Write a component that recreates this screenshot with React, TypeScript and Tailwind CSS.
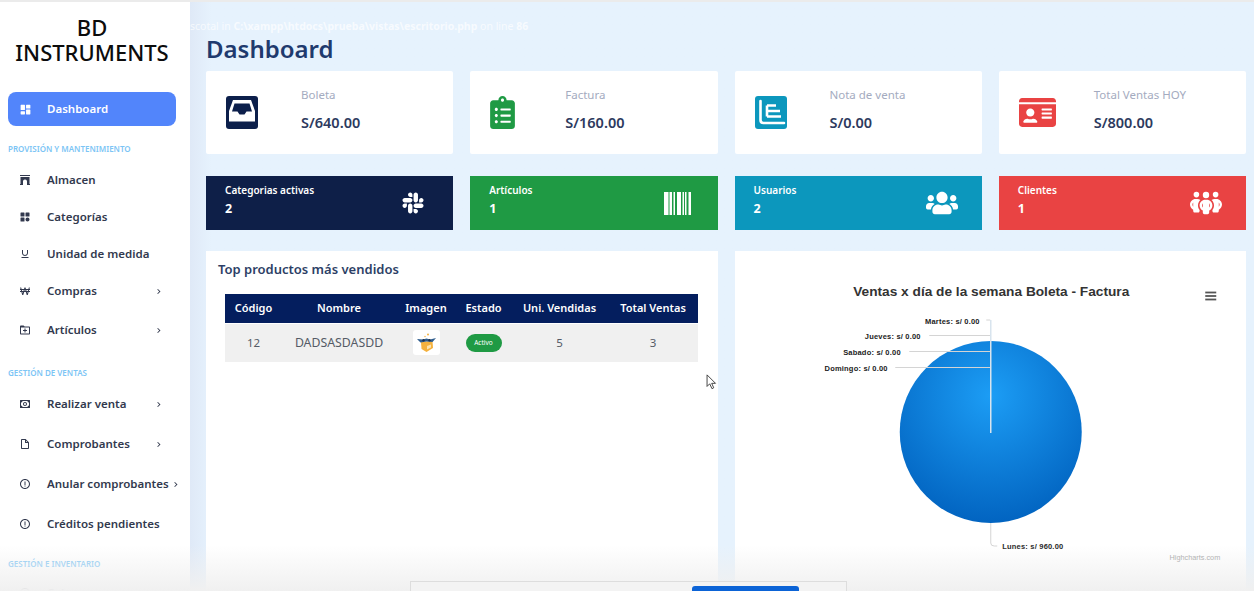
import React from "react";
import {
  BiSolidDashboard, BiSolidArch, BiSolidCategory, BiUnderline, BiWon, BiFolderPlus, BiMoney, BiFileBlank, BiErrorCircle, BiChevronRight,
} from "react-icons/bi";
import { FaClipboardList, FaIdCard, FaSlack, FaUsers } from "react-icons/fa";
import { FaPeopleGroup } from "react-icons/fa6";

function InboxIcon({ className }: { className?: string }) {
  return (
    <svg viewBox="0 0 32 33" className={className}>
      <rect x="0" y="0" width="32" height="33" rx="3" fill="currentColor" />
      <path d="M7 4 H25 L29 15 V25.5 H3 V15 Z" fill="#fff" />
      <path d="M8.5 7.5 H23.5 L26 15.5 H20.5 L18.5 18.5 H13.5 L11.5 15.5 H6 Z" fill="currentColor" />
    </svg>
  );
}

function PollIcon({ className }: { className?: string }) {
  return (
    <svg viewBox="0 0 32 33" className={className}>
      <rect x="0" y="0" width="32" height="33" rx="3" fill="currentColor" />
      <path d="M5.5 5 V24 Q5.5 27 8.5 27 H29" fill="none" stroke="#fff" strokeWidth="2.6" strokeLinecap="round" />
      <path d="M12 9.5 H21 M12 15 H25 M12 20.5 H26 M12 9.5 V20.5" fill="none" stroke="#fff" strokeWidth="2.6" />
    </svg>
  );
}

function BarcodeIcon({ className }: { className?: string }) {
  const bars = [[0, 4.5], [5.5, 2.5], [9.5, 1.5], [13, 4], [18.5, 1.5], [21, 1.5], [24.5, 2.5]];
  return (
    <svg viewBox="0 0 27 23" className={className}>
      {bars.map(([x, w]) => (
        <rect key={x} x={x} y="0" width={w} height="23" fill="#fff" />
      ))}
    </svg>
  );
}

function Item({ icon: Icon, label, h, chev, chevClass }: { icon: any; label: string; h: string; chev?: boolean; chevClass?: string }) {
  return (
    <div className={`flex items-center pl-[19px] shrink-0 ${h} text-[#32394e]`}>
      <Icon className="w-[12px] h-[12px] shrink-0" />
      <span className="ml-[16px] text-[11.5px] font-semibold whitespace-nowrap">{label}</span>
      {chev && <BiChevronRight className={`w-[11px] h-[11px] ${chevClass ?? "ml-auto mr-[26px]"}`} />}
    </div>
  );
}

function Heading({ children, cls }: { children: string; cls: string }) {
  return <div className={`pl-[8px] text-[8px] font-semibold text-[#7cc5f5] uppercase whitespace-nowrap shrink-0 ${cls}`}>{children}</div>;
}

function Stat({ icon: Icon, color, label, value, size, iconW }: { icon: any; color: string; label: string; value: string; size: string; iconW: string }) {
  return (
    <div className="bg-white h-[83px] flex items-center pl-[20px] rounded-[2px]">
      <div className={`${iconW} ${color} flex items-center shrink-0`}>
        <Icon className={size} />
      </div>
      <div className="-mt-[7px]">
        <div className="text-[11.5px] text-[#a4abc0] leading-[16px]">{label}</div>
        <div className="text-[14.5px] font-semibold text-[#2d3a5e] leading-[20px] mt-[9px]">{value}</div>
      </div>
    </div>
  );
}

function Tile({ icon: Icon, color, label, value, iconCls }: { icon: any; color: string; label: string; value: string; iconCls: string }) {
  return (
    <div className={`${color} h-[54px] flex items-center pl-[19px] pr-[24px] text-white`}>
      <div className="flex-1 -mt-[6px]">
        <div className="text-[10px] font-semibold leading-[14px]">{label}</div>
        <div className="text-[12.5px] font-bold leading-[16px] mt-[4px]">{value}</div>
      </div>
      <Icon className={iconCls} />
    </div>
  );
}

function BoxPicture() {
  return (
    <svg viewBox="0 0 27 25" className="w-[27px] h-[25px] bg-white rounded-[3px] mx-auto block">
      <path d="M8 12 L19.5 11 L20 18 L13.5 22 L8.5 19 Z" fill="#f4b13e" />
      <path d="M14 16 l4 -1.5 v3 l-4 2 z" fill="#fbe3b0" />
      <path d="M4 9 L10 9.5 L13.5 8.5 L17 9.5 L23 8 L19.5 12 L13.5 11.5 L7.5 12.5 Z" fill="#2f5d8e" />
      <circle cx="10.5" cy="10.3" r="1.2" fill="#1d2f4a" />
      <circle cx="16.5" cy="10.3" r="1.2" fill="#1d2f4a" />
      <circle cx="15" cy="4.5" r="1" fill="#f4b13e" />
      <circle cx="12" cy="6.5" r="0.7" fill="#f4b13e" />
    </svg>
  );
}

function Chart() {
  const lab = { fontSize: 7.5, fontWeight: 700, fill: "#222", fontFamily: "'Liberation Sans', sans-serif", letterSpacing: 0.2 };
  return (
    <svg viewBox="0 0 511 340" className="w-full h-[340px] block">
      <defs>
        <radialGradient id="pie" cx="50%" cy="30%" r="75%">
          <stop offset="0%" stopColor="#1c9df5" />
          <stop offset="100%" stopColor="#0060bd" />
        </radialGradient>
      </defs>
      <text x="256" y="45" textAnchor="middle" fontSize="13.7" fontWeight="700" fill="#333" fontFamily="'Liberation Sans', sans-serif">
        Ventas x día de la semana Boleta - Factura
      </text>
      <g stroke="#555" strokeWidth="1.8">
        <line x1="470" x2="481" y1="41.5" y2="41.5" />
        <line x1="470" x2="481" y1="45" y2="45" />
        <line x1="470" x2="481" y1="48.5" y2="48.5" />
      </g>
      <circle cx="255.5" cy="181" r="91" fill="url(#pie)" />
      <g stroke="#d4d4d4" strokeWidth="1" fill="none">
        <path d="M251 69 H255" />
        <path d="M194 84.5 H255" />
        <path d="M174 100.5 H255" />
        <path d="M160 116.5 H255" />
        <path d="M255.5 272 V292 Q255.5 295 259 295 H262" />
      </g>
      <line x1="255.5" x2="255.5" y1="69" y2="182" stroke="#d8e4ee" strokeWidth="1.5" />
      <text x="244.5" y="73" textAnchor="end" {...lab}>Martes: s/ 0.00</text>
      <text x="185.5" y="88" textAnchor="end" {...lab}>Jueves: s/ 0.00</text>
      <text x="165.5" y="104" textAnchor="end" {...lab}>Sabado: s/ 0.00</text>
      <text x="152.5" y="120" textAnchor="end" {...lab}>Domingo: s/ 0.00</text>
      <text x="267" y="298" {...lab}>Lunes: s/ 960.00</text>
      <text x="485" y="309" textAnchor="end" fontSize="7.3" fill="#9a9a9a" fontFamily="'Liberation Sans', sans-serif">Highcharts.com</text>
    </svg>
  );
}

export default function App() {
  return (
    <div className="relative w-[1254px] h-[591px] overflow-hidden flex flex-col bg-[#e6f2fd]" style={{ fontFamily: "'Noto Sans', sans-serif" }}>
      <div className="h-[2px] bg-[#ebebeb] shrink-0" />
      <div className="flex flex-1 min-h-0">
        <aside className="w-[190px] shrink-0 bg-white flex flex-col overflow-hidden">
          <div className="shrink-0 text-center text-[22px] font-medium leading-[25px] text-[#0c0c0c] pt-[13px] pr-[6px]">
            <div>BD</div>
            <div>INSTRUMENTS</div>
          </div>
          <div className="shrink-0 mx-[8px] mr-[14px] mt-[27px] h-[34px] rounded-[8px] bg-[#5285fb] text-white flex items-center pl-[11px]">
            <BiSolidDashboard className="w-[13px] h-[13px]" />
            <span className="ml-[15px] text-[11.5px] font-semibold">Dashboard</span>
          </div>
          <Heading cls="mt-[17px] leading-[12px]">Provisión y mantenimiento</Heading>
          <div className="shrink-0 mt-[6px] flex flex-col">
            <Item icon={BiSolidArch} label="Almacen" h="h-[37px]" />
            <Item icon={BiSolidCategory} label="Categorías" h="h-[37px]" />
            <Item icon={BiUnderline} label="Unidad de medida" h="h-[37px]" />
            <Item icon={BiWon} label="Compras" h="h-[38px]" chev />
            <Item icon={BiFolderPlus} label="Artículos" h="h-[40px]" chev />
          </div>
          <Heading cls="mt-[17px] leading-[12px]">Gestión de ventas</Heading>
          <div className="shrink-0 mt-[5px] flex flex-col">
            <Item icon={BiMoney} label="Realizar venta" h="h-[40px]" chev />
            <Item icon={BiFileBlank} label="Comprobantes" h="h-[40px]" chev />
            <Item icon={BiErrorCircle} label="Anular comprobantes" h="h-[40px]" chev chevClass="ml-[1px]" />
            <Item icon={BiErrorCircle} label="Créditos pendientes" h="h-[40px]" />
          </div>
          <Heading cls="mt-[14px] leading-[12px]">Gestión e inventario</Heading>
          <div className="shrink-0 mt-[3px]">
            <Item icon={BiErrorCircle} label="Cajas" h="h-[40px]" />
          </div>
        </aside>

        <main className="flex-1 min-w-0 pl-[16px] pr-[8px] overflow-hidden bg-gradient-to-r from-[#dfe9f7] from-0% to-[#e6f2fd] to-[2%]">
          <div className="-ml-[16px] h-[16px] mt-[16px] text-[10.5px] leading-[16px] text-white/70 whitespace-nowrap">
            scotal in <b>C:\xampp\htdocs\prueba\vistas\escritorio.php</b> on line <b>86</b>
          </div>
          <h1 className="text-[24px] font-semibold text-[#1f3a6e] leading-[32px] -mt-[1px]">Dashboard</h1>
          <div className="grid grid-cols-4 gap-x-[17px] mt-[6px]">
            <Stat icon={InboxIcon} color="text-[#0c1f4b]" label="Boleta" value="S/640.00" size="w-[32px] h-[33px]" iconW="w-[75px]" />
            <Stat icon={FaClipboardList} color="text-[#1f9a44]" label="Factura" value="S/160.00" size="w-[33px] h-[33px] -ml-[4px]" iconW="w-[75px]" />
            <Stat icon={PollIcon} color="text-[#0c97bd]" label="Nota de venta" value="S/0.00" size="w-[32px] h-[33px]" iconW="w-[75px]" />
            <Stat icon={FaIdCard} color="text-[#e94343]" label="Total Ventas HOY" value="S/800.00" size="w-[37px] h-[33px]" iconW="w-[75px]" />
          </div>
          <div className="grid grid-cols-4 gap-x-[17px] mt-[22px]">
            <Tile icon={FaSlack} color="bg-[#0e1f48]" label="Categorias activas" value="2" iconCls="w-[24px] h-[24px] mr-[4px]" />
            <Tile icon={BarcodeIcon} color="bg-[#1f9a44]" label="Artículos" value="1" iconCls="w-[27px] h-[23px] mr-[3px]" />
            <Tile icon={FaUsers} color="bg-[#0c97bd]" label="Usuarios" value="2" iconCls="w-[32px] h-[32px]" />
            <Tile icon={FaPeopleGroup} color="bg-[#e94343]" label="Clientes" value="1" iconCls="w-[32px] h-[32px]" />
          </div>
          <div className="grid grid-cols-2 gap-x-[17px] mt-[21px]">
            <section className="bg-white h-[340px] px-[12px] pt-[9px]">
              <h2 className="text-[13px] font-semibold text-[#2d3f66] leading-[18px]">Top productos más vendidos</h2>
              <table className="mt-[16px] ml-[7px] w-[473px] table-fixed border-collapse">
                <colgroup>
                  <col className="w-[57px]" />
                  <col className="w-[114px]" />
                  <col className="w-[60px]" />
                  <col className="w-[55px]" />
                  <col className="w-[97px]" />
                  <col className="w-[90px]" />
                </colgroup>
                <thead>
                  <tr className="bg-[#041e5e] text-white h-[29px] text-[11px]">
                    <th className="font-semibold text-center">Código</th>
                    <th className="font-semibold text-center">Nombre</th>
                    <th className="font-semibold text-center">Imagen</th>
                    <th className="font-semibold text-center">Estado</th>
                    <th className="font-semibold text-center">Uni. Vendidas</th>
                    <th className="font-semibold text-center">Total Ventas</th>
                  </tr>
                </thead>
                <tbody>
                  <tr className="bg-[#f0f0f0] h-[39px] text-[11.5px] text-[#555b66] border-t border-white">
                    <td className="text-center">12</td>
                    <td className="text-center text-[12.3px]">DADSASDASDD</td>
                    <td><BoxPicture /></td>
                    <td>
                      <span className="mx-auto flex items-center justify-center w-[36px] h-[18px] rounded-full bg-[#1f9a44] text-white text-[6.5px]">Activo</span>
                    </td>
                    <td className="text-center">5</td>
                    <td className="text-center">3</td>
                  </tr>
                </tbody>
              </table>
            </section>
            <section className="bg-white h-[340px]">
              <Chart />
            </section>
          </div>
        </main>
      </div>

      <div className="absolute left-0 right-0 bottom-0 h-[46px] bg-gradient-to-b from-transparent to-[#f0f0f0] pointer-events-none" />
      <div className="absolute left-[410px] top-[581px] w-[437px] h-[12px] bg-[#f3f3f3] border border-[#dddddd]">
        <div className="absolute left-[281px] top-[4px] w-[107px] h-[10px] rounded-t-[3px] bg-[#0b63d6]" />
      </div>
      <svg viewBox="0 0 12 18" className="absolute left-[706px] top-[374px] w-[11px] h-[16px]">
        <path d="M1 1 V14 L4 11 L6.5 16.5 L8.5 15.5 L6.2 10.5 H10.5 Z" fill="#fff" stroke="#333" strokeWidth="1" strokeLinejoin="round" />
      </svg>
    </div>
  );
}
